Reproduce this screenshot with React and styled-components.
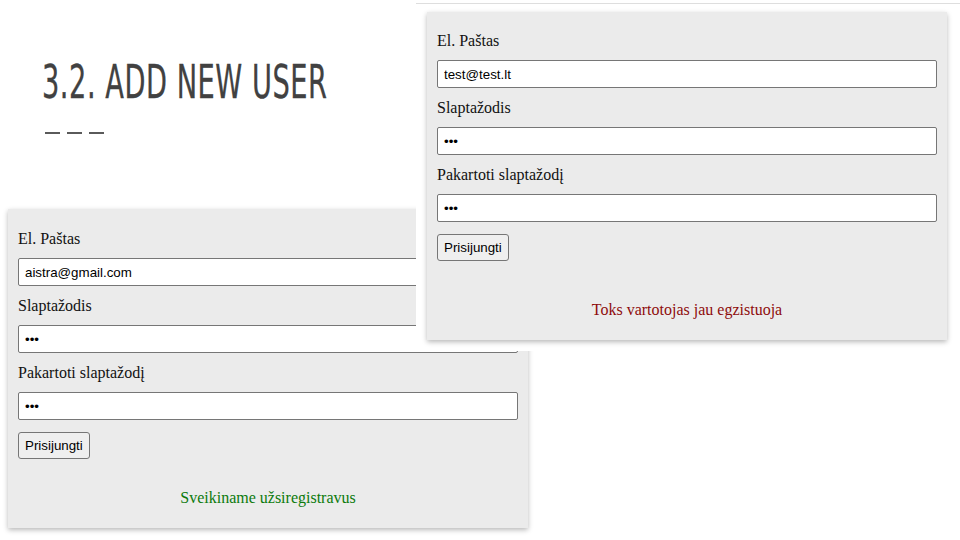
import React from 'react'
import styled, { createGlobalStyle } from 'styled-components'

const GlobalStyle = createGlobalStyle`
  html, body {
    margin: 0;
    padding: 0;
    background: #ffffff;
  }
`

const forms = [
  {
    id: 'ok',
    email: 'aistra@gmail.com',
    message: 'Sveikiname užsiregistravus',
    tone: 'success',
  },
  {
    id: 'exists',
    email: 'test@test.lt',
    message: 'Toks vartotojas jau egzistuoja',
    tone: 'error',
  },
]

const RegisterForm = ({ form, top, gap }) => (
  <Panel $top={top}>
    <Label>El. Paštas</Label>
    <Input type='text' defaultValue={form.email} />
    <Label>Slaptažodis</Label>
    <Input type='password' defaultValue='123' />
    <Label>Pakartoti slaptažodį</Label>
    <Input type='password' defaultValue='123' />
    <Button type='button'>Prisijungti</Button>
    <Message $tone={form.tone} $gap={gap}>
      {form.message}
    </Message>
  </Panel>
)

const App = () => {
  return (
    <>
      <GlobalStyle />
      <Slide>
        <Heading>
          <Title>3.2. ADD NEW USER</Title>
          <Dashes>
            <Dash />
            <Dash />
            <Dash />
          </Dashes>
        </Heading>

        <LeftShot>
          <RegisterForm form={forms[0]} top={21} gap={30} />
        </LeftShot>

        <RightShot>
          <RegisterForm form={forms[1]} top={20} gap={40} />
        </RightShot>
      </Slide>
    </>
  )
}

export default App

const Slide = styled.div`
  position: relative;
  width: 960px;
  height: 540px;
  overflow: hidden;
  background: #ffffff;
`

const Heading = styled.header`
  padding: 57px 0 0 42px;
`

const Title = styled.h1`
  margin: 0;
  font-family: 'DejaVu Sans Condensed', 'DejaVu Sans', sans-serif;
  font-weight: 400;
  font-size: 47px;
  line-height: 50px;
  color: #414141;
  letter-spacing: 0.8px;
  white-space: nowrap;
  -webkit-text-stroke: 0.3px #414141;
  transform: scaleX(0.645);
  transform-origin: left center;
`

const Dashes = styled.div`
  display: flex;
  gap: 7px;
  margin: 25px 0 0 3px;
`

const Dash = styled.span`
  width: 15px;
  height: 2px;
  background: #5a5a5a;
`

const LeftShot = styled.section`
  position: absolute;
  left: 8px;
  top: 209px;
`

const RightShot = styled.section`
  position: absolute;
  left: 416px;
  top: 3px;
  width: 544px;
  height: 348px;
  background: #ffffff;
  border-top: 1px solid #dedede;
  padding: 8px 0 0 11px;
  box-sizing: border-box;
`

const Panel = styled.form`
  width: 520px;
  box-sizing: border-box;
  padding: ${(p) => p.$top}px 10px 21px;
  background: #ebebeb;
  box-shadow: 0 2px 5px rgba(0, 0, 0, 0.28);
  display: flex;
  flex-direction: column;
  align-items: flex-start;
`

const Label = styled.label`
  display: block;
  font-family: 'Liberation Serif', 'Times New Roman', serif;
  font-size: 16px;
  line-height: 18px;
  color: #111111;
  margin-bottom: 10px;
`

const Input = styled.input`
  width: 500px;
  height: 28px;
  box-sizing: border-box;
  margin: 0 0 11px;
  padding: 0 6px;
  border: 1px solid #767676;
  border-radius: 2px;
  background: #ffffff;
  font-family: 'Liberation Sans', Arial, sans-serif;
  font-size: 13.33px;
  color: #000000;
  outline: none;
`

const Button = styled.button`
  margin-top: 1px;
  height: 27px;
  padding: 0 6px;
  border: 1px solid #767676;
  border-radius: 3px;
  background: #efefef;
  font-family: 'Liberation Sans', Arial, sans-serif;
  font-size: 13.33px;
  color: #000000;
`

const Message = styled.p`
  align-self: stretch;
  margin: ${(p) => p.$gap}px 0 0;
  text-align: center;
  font-family: 'Liberation Serif', 'Times New Roman', serif;
  font-size: 16px;
  line-height: 18px;
  color: ${(p) => (p.$tone === 'error' ? '#8e0c0c' : '#0b7a0b')};
`
